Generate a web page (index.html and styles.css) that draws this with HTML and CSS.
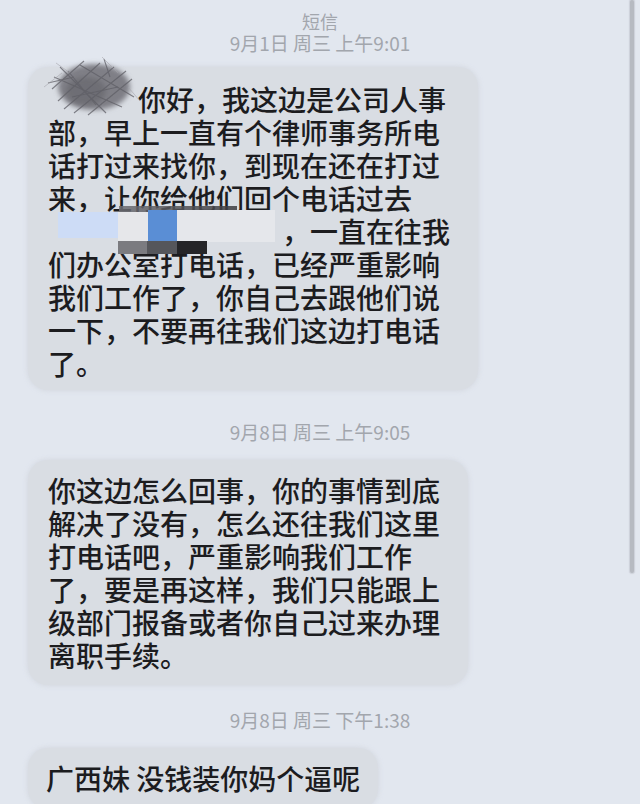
FILE: index.html
```html
<!DOCTYPE html>
<html lang="zh-CN">
<head>
<meta charset="utf-8">
<title>短信</title>
<link rel="stylesheet" href="styles.css">
</head>
<body>
<div class="screen">
  <div class="title">短信</div>
  <div class="stamp stamp-first">9月1日 周三 上午9:01</div>

  <div class="bubble bubble-one">
    <p class="msg"><span class="gap gap-name"></span>你好，我这边是公司人事<br>部，早上一直有个律师事务所电<br>话打过来找你，到现在还在打过<br>来，让你给他们回个电话过去<br><span class="gap gap-num"></span>，一直在往我<br>们办公室打电话，已经严重影响<br>我们工作了，你自己去跟他们说<br>一下，不要再往我们这边打电话<br>了。</p>
    <svg class="scribble" viewBox="0 0 100 60" width="100" height="60" aria-hidden="true">
      <defs>
        <filter id="soft" x="-20%" y="-20%" width="140%" height="140%"><feGaussianBlur stdDeviation="2.4"/></filter>
        <filter id="soft2" x="-20%" y="-20%" width="140%" height="140%"><feGaussianBlur stdDeviation="0.5"/></filter>
      </defs>
      <ellipse cx="52" cy="30" rx="36" ry="23" fill="#7f7f86" filter="url(#soft)"/>
      <ellipse cx="44" cy="34" rx="20" ry="14" fill="#6e6e75" filter="url(#soft)"/>
      <g stroke="#5f5f66" stroke-width="1.1" fill="none" filter="url(#soft2)" opacity="0.75">
        <path d="M10 32 L42 4"/><path d="M16 44 L58 6"/><path d="M22 52 L72 10"/>
        <path d="M32 56 L84 14"/><path d="M46 58 L90 22"/><path d="M12 20 L80 50"/>
        <path d="M18 10 L64 56"/><path d="M6 26 L32 20"/><path d="M62 2 L68 20"/>
        <path d="M38 8 L92 40"/><path d="M26 14 L54 48"/><path d="M30 40 L76 30"/>
      </g>
      <g stroke="#a3a3a9" stroke-width="0.8" fill="none" opacity="0.7">
        <path d="M2 30 L20 16"/><path d="M60 0 L76 16"/><path d="M86 30 L98 44"/><path d="M14 6 L28 16"/>
      </g>
    </svg>
    <span class="mask mask-line"></span>
    <span class="mask mask-paleblue"></span>
    <span class="mask mask-light"></span>
    <span class="mask mask-blue"></span>
    <span class="mask mask-white"></span>
    <span class="mask mask-dark"></span>
  </div>

  <div class="stamp stamp-second">9月8日 周三 上午9:05</div>

  <div class="bubble bubble-two">
    <p class="msg">你这边怎么回事，你的事情到底<br>解决了没有，怎么还往我们这里<br>打电话吧，严重影响我们工作<br>了，要是再这样，我们只能跟上<br>级部门报备或者你自己过来办理<br>离职手续。</p>
  </div>

  <div class="stamp stamp-third">9月8日 周三 下午1:38</div>

  <div class="bubble bubble-three">
    <p class="msg">广西妹 没钱装你妈个逼呢</p>
  </div>

  <div class="scrollbar"></div>
</div>
</body>
</html>
```

FILE: styles.css
```css
html, body {
  margin: 0;
  padding: 0;
}

body {
  background: #e2e7ef;
  font-family: "Noto Sans CJK SC", "Noto Sans", sans-serif;
  color: #1c1c1f;
}

.screen {
  position: relative;
  width: 640px;
  height: 804px;
  overflow: hidden;
  display: flex;
  flex-direction: column;
  align-items: flex-start;
  padding-top: 10px;
  box-sizing: border-box;
}

.title {
  align-self: stretch;
  text-align: center;
  font-size: 18px;
  line-height: 22px;
  color: #a2a6ad;
}

.stamp {
  align-self: stretch;
  text-align: center;
  font-size: 19px;
  line-height: 22px;
  color: #a2a6ad;
}

.stamp-second { margin-top: 31px; }
.stamp-third { margin-top: 24px; }

.bubble {
  position: relative;
  margin-left: 28px;
  background: #d9dde3;
  border-radius: 20px;
  box-shadow: 0 0 4px 1px rgba(205, 209, 216, 0.6);
}

.bubble-one {
  margin-top: 13px;
  padding: 16px 28px 10px 20px;
}

.bubble-two {
  margin-top: 17px;
  padding: 14px 28px 13px 20px;
}

.bubble-three {
  margin-top: 17px;
  padding: 14px 18px 14px 18px;
}

.msg {
  margin: 0;
  font-size: 28px;
  font-weight: 500;
  line-height: 33px;
  white-space: nowrap;
}

.gap {
  display: inline-block;
}

.gap-name { width: 90px; }
.gap-num { width: 234px; }

.scribble {
  position: absolute;
  left: 14px;
  top: -10px;
}

.mask {
  position: absolute;
  display: block;
}

.mask-line {
  left: 91px;
  top: 139px;
  width: 118px;
  height: 6px;
  background: linear-gradient(90deg, #6e6e74, #3c3c40);
  opacity: 0.85;
}

.mask-paleblue {
  left: 30px;
  top: 145px;
  width: 60px;
  height: 26px;
  background: #cddcf6;
}

.mask-light {
  left: 90px;
  top: 145px;
  width: 30px;
  height: 30px;
  background: #e6e7ea;
}

.mask-blue {
  left: 120px;
  top: 143px;
  width: 29px;
  height: 33px;
  background: #5a8ed5;
}

.mask-white {
  left: 149px;
  top: 143px;
  width: 98px;
  height: 32px;
  background: #e5e7eb;
}

.mask-dark {
  left: 90px;
  top: 174px;
  width: 89px;
  height: 13px;
  background: linear-gradient(90deg, #7b7b80 0, #7b7b80 33%, #55565b 33%, #55565b 66%, #252528 66%);
}

.scrollbar {
  position: absolute;
  right: 6px;
  top: 0;
  width: 4px;
  height: 573px;
  border-radius: 2px;
  background: #b6bac1;
  box-shadow: 0 0 1px 1px rgba(190, 194, 201, 0.6);
}
```
